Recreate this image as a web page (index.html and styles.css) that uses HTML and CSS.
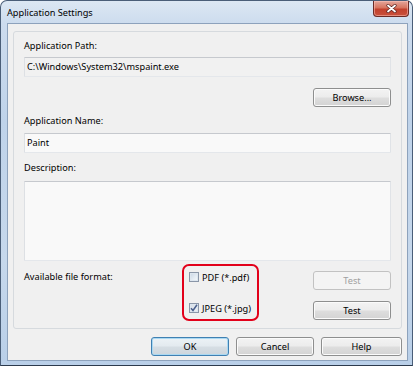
FILE: index.html
```html
<!DOCTYPE html>
<html>
<head>
<meta charset="utf-8">
<title>Application Settings</title>
<link rel="stylesheet" href="styles.css">
</head>
<body>
<div class="window">
  <div class="titlebar">
    <span class="title">Application Settings</span>
    <div class="close">
      <svg width="11" height="9" viewBox="0 0 11 9"><path d="M2 1.5 L9 7.5 M9 1.5 L2 7.5" stroke="#5a2320" stroke-width="3.2" stroke-linecap="round" fill="none"/><path d="M2 1.5 L9 7.5 M9 1.5 L2 7.5" stroke="#ffffff" stroke-width="1.8" stroke-linecap="round" fill="none"/></svg>
    </div>
  </div>
  <div class="client">
    <div class="group">
      <div class="label first">Application Path:</div>
      <div class="field readonly">C:\Windows\System32\mspaint.exe</div>
      <div class="browse-row"><button class="btn">Browse...</button></div>
      <div class="label after-btn">Application Name:</div>
      <div class="field">Paint</div>
      <div class="label after-field">Description:</div>
      <div class="field textarea"></div>
      <div class="format-row">
        <div class="label format-label">Available file format:</div>
        <div class="highlight">
          <div class="check"><span class="box"></span><span>PDF (*.pdf)</span></div>
          <div class="check"><span class="box checked"><svg width="8" height="8" viewBox="0 0 8 8"><path d="M1 4.2 L3 6.5 L7 0.8" stroke="#4a5f8c" stroke-width="1.5" fill="none"/></svg></span><span>JPEG (*.jpg)</span></div>
        </div>
        <div class="tests">
          <button class="btn disabled">Test</button>
          <button class="btn">Test</button>
        </div>
      </div>
    </div>
    <div class="actions">
      <button class="btn default">OK</button>
      <button class="btn">Cancel</button>
      <button class="btn help">Help</button>
    </div>
  </div>
</div>
</body>
</html>
```
FILE: styles.css
```css
html, body {
  margin: 0;
  padding: 0;
  background: #ffffff;
}

body {
  font-family: "Noto Sans", "Open Sans", sans-serif;
  font-size: 9.2px;
  color: #000;
}

.window {
  width: 413px;
  height: 366px;
  box-sizing: border-box;
  border: 1px solid #4a5e78;
  border-bottom-color: #2c3a4c;
  border-radius: 7px 7px 0 0;
  background: linear-gradient(to bottom, #dce7f3 0px, #cddcee 22px, #bfd3ea 120px, #c6d8ec 260px, #b9cfe8 366px);
  display: flex;
  flex-direction: column;
}

.titlebar {
  height: 22px;
  display: flex;
  align-items: flex-start;
  justify-content: space-between;
}

.title {
  margin: 5px 0 0 6px;
  line-height: 14px;
  color: #000;
}

.close {
  width: 36px;
  height: 16px;
  box-sizing: border-box;
  margin-right: 3px;
  border: 1px solid #6b2b26;
  border-top: none;
  border-radius: 0 0 4px 4px;
  background: linear-gradient(to bottom, #e3a79c 0%, #d7745f 45%, #c2412d 55%, #c9513c 100%);
  box-shadow: inset 0 0 0 1px rgba(255, 200, 190, 0.5);
  display: flex;
  align-items: center;
  justify-content: center;
}

.client {
  margin: 0 4px 4px 6px;
  border: 1px solid #8da2bc;
  background: #f0f0f0;
  padding: 7px 5px 4px 5px;
  display: flex;
  flex-direction: column;
}

.group {
  border: 1px solid #d6dade;
  border-radius: 3px;
  padding: 7px 10px 7px 10px;
  display: flex;
  flex-direction: column;
}

.label {
  line-height: 14px;
  height: 14px;
  white-space: nowrap;
}

.label.after-btn {
  margin-top: 7px;
}

.label.after-field {
  margin-top: 8px;
}

.field {
  height: 20px;
  box-sizing: border-box;
  margin-top: 5px;
  border: 1px solid;
  border-color: #c6c9ce #e0e3e7 #e4e7eb #dde0e4;
  border-radius: 1px;
  background: #f9f9f9;
  padding: 0 2px;
  line-height: 18px;
}

.label.first + .field {
  margin-top: 4px;
}

.field.readonly {
  background: #f1f1f1;
}

.field.textarea {
  height: 80px;
  margin-top: 6px;
}

.browse-row {
  display: flex;
  justify-content: flex-end;
  margin-top: 11px;
}

.btn {
  font-family: inherit;
  font-size: inherit;
  color: #000;
  width: 78px;
  height: 19px;
  padding: 0;
  box-sizing: border-box;
  border: 1px solid #8e8f8f;
  border-radius: 3px;
  background: linear-gradient(to bottom, #f3f3f3 0%, #ececec 48%, #dedede 52%, #d3d3d3 100%);
  box-shadow: inset 0 0 0 1px #fbfbfb;
  line-height: 16px;
  text-align: center;
}

.btn.disabled {
  color: #a0a0a0;
  border-color: #c2c2c2;
  background: #f4f4f4;
  box-shadow: none;
}

.btn.default {
  border-color: #3f80b2;
  background: linear-gradient(to bottom, #ecf2f6 0%, #e3eaef 48%, #d6dee4 52%, #ccd5dc 100%);
  box-shadow: inset 0 0 0 1px #a9d8f2;
}

.btn.help {
  width: 81px;
}

.format-row {
  display: flex;
  align-items: flex-start;
  margin-top: 3px;
}

.format-label {
  width: 158px;
  margin-top: 6px;
}

.highlight {
  width: 77px;
  box-sizing: border-box;
  border: 2px solid #e2001a;
  border-radius: 7px;
  padding: 4px 4px 4px 5px;
  display: flex;
  flex-direction: column;
  gap: 17px;
}

.check {
  display: flex;
  align-items: center;
  height: 14px;
  gap: 3px;
  white-space: nowrap;
}

.box {
  width: 10px;
  height: 10px;
  box-sizing: border-box;
  border: 1px solid #8a96a8;
  background: linear-gradient(135deg, #c9d6e4 0%, #e6edf4 60%, #f7f9fb 100%);
  box-shadow: inset 0 0 0 1px #dde6ef;
  display: flex;
  align-items: center;
  justify-content: center;
}

.box.checked {
  background: linear-gradient(135deg, #d6dde6 0%, #eef1f5 100%);
}

.tests {
  margin-left: auto;
  margin-top: 7px;
  display: flex;
  flex-direction: column;
  gap: 11px;
}

.actions {
  display: flex;
  justify-content: flex-end;
  gap: 7px;
  margin-top: 8px;
}
```
